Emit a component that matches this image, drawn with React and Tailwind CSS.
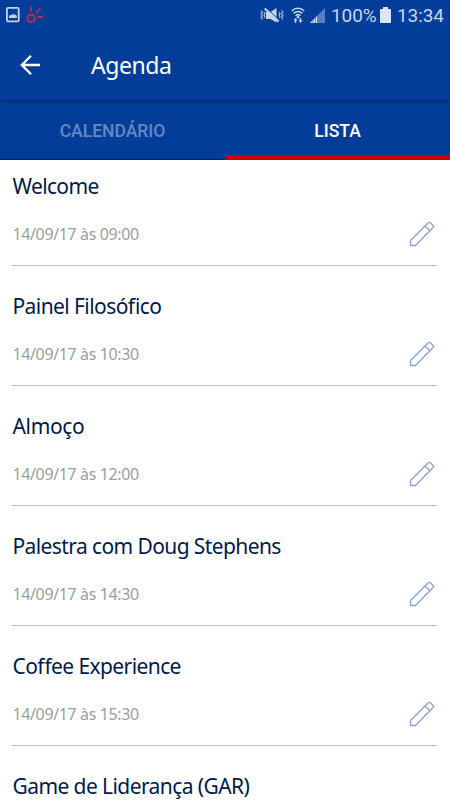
import React, { useState } from "react";

const EVENTS = [
  { title: "Welcome", date: "14/09/17 às 09:00", tracking: "tracking-[-0.65px]" },
  { title: "Painel Filosófico", date: "14/09/17 às 10:30", tracking: "tracking-[-0.58px]" },
  { title: "Almoço", date: "14/09/17 às 12:00", tracking: "tracking-[-0.35px]" },
  { title: "Palestra com Doug Stephens", date: "14/09/17 às 14:30", tracking: "tracking-[-0.6px]" },
  { title: "Coffee Experience", date: "14/09/17 às 15:30", tracking: "tracking-[-0.6px]" },
  { title: "Game de Liderança (GAR)", date: "14/09/17 às 17:00", tracking: "tracking-[-0.58px]" },
];

// ======================
// ICONS
// ======================
function PictureIcon() {
  return (
    <svg width="14" height="16" viewBox="0 0 14 16" fill="none">
      <rect x=".9" y=".9" width="11.8" height="13.4" rx="1" stroke="#c3d1ea" strokeWidth="1.8" />
      <path d="M3 11V9l1.5-1.2 1 .8L7 6.5 8.3 8l1.300-.5L10.800 9v2z" fill="#c3d1ea" />
    </svg>
  );
}

function SparkIcon() {
  return (
    <svg width="18" height="19" viewBox="0 0 18 19" fill="none" stroke="#ba2b4a">
      <circle cx="5.1" cy="12.4" r="3.7" strokeWidth="2.2" />
      <path d="M5 .7V6M9.600 7.200l5-4.800M11.600 11H17" strokeWidth="1.9" />
    </svg>
  );
}

function MuteIcon() {
  return (
    <svg width="24" height="17" viewBox="0 0 24 17" fill="none">
      <path d="M6 5h4.500L16.500 1v14.500L10.500 12H6z" fill="#c6d4ec" />
      <path d="M6.500 1l12.500 12" stroke="#023e99" strokeWidth="1" />
      <path d="M4.800 1.500l13.700 13" stroke="#c6d4ec" strokeWidth="2.1" />
      <path
        d="M1 3.500l1.500 1.700L1 7l1.500 1.800L1 10.600l1.500 1.900M4 5l1 1.500L4 8l1 1.500L4 11M19 5l1 1.500L19 8l1 1.500-1 1.500M21.500 3.500L23 5.200 21.500 7 23 8.800l-1.500 1.800 1.500 1.900"
        stroke="#a9bfe1"
        strokeWidth="1.1"
      />
    </svg>
  );
}

function WifiIcon() {
  return (
    <svg width="14" height="17" viewBox="0 0 14 17" fill="none">
      <path
        d="M.8 4C4.300.4 9.700.4 13.200 4M2.700 6.400c2.400-2.400 6.200-2.400 8.600 0M4.600 8.700c1.400-1.400 3.400-1.400 4.800 0"
        stroke="#c6d4ec"
        strokeWidth="1.5"
      />
      <circle cx="7" cy="10.3" r="1.3" fill="#c6d4ec" />
      <path d="M2.500 13.500l2-2.500 2 2.500H5.200V16H3.800v-2.500zM7.500 13.300h1.300V11h1.400v2.300h1.300l-2 2.700z" fill="#c6d4ec" />
    </svg>
  );
}

function SignalIcon() {
  return (
    <svg width="15" height="15" viewBox="0 0 15 15">
      <path d="M15 0v15H0z" fill="#5480bd" />
      <path d="M7 8v7H0z" fill="#d5dff1" />
      <path d="M3 11v4M5.500 9v6" stroke="#3567ae" strokeWidth=".7" />
    </svg>
  );
}

function BatteryIcon() {
  return (
    <svg width="11" height="16" viewBox="0 0 11 16" fill="#dce5f4">
      <path d="M3 0h5v2h2.200q.8 0 .8.800v12.400q0 .8-.8.800H.8q-.8 0-.8-.8V2.800Q0 2 .8 2H3z" />
    </svg>
  );
}

function BackIcon() {
  return (
    <svg width="20" height="20" viewBox="0 0 20 20" fill="none" stroke="#fff" strokeWidth="2.3">
      <path d="M20 10H2M11 .8L1.800 10l9.200 9.200" />
    </svg>
  );
}

function PencilIcon() {
  return (
    <svg width="26" height="26" viewBox="0 0 26 26" fill="none" stroke="#85a5d6" strokeWidth="1.3">
      <path
        d="M1.500 24.500v-5L19.500 1.500q.8-.7 1.600 0l3.200 3.200q.7.800 0 1.600L6.500 24.500zM16 5l5 5"
        strokeLinejoin="round"
      />
    </svg>
  );
}

// ======================
// SECTIONS
// ======================
function StatusBar() {
  return (
    <div className="h-[30px] flex items-center justify-between pl-[6px] pr-[6px] text-[#c6d4ec]">
      <div className="flex items-center gap-[6px]">
        <PictureIcon />
        <SparkIcon />
      </div>
      <div className="flex items-center">
        <MuteIcon />
        <span className="ml-[7px]"><WifiIcon /></span>
        <span className="ml-[5px]"><SignalIcon /></span>
        <span className="ml-[6px] w-[46px] font-['Roboto',sans-serif] text-[19px] leading-none whitespace-nowrap tracking-[-0.1px]">
          100%
        </span>
        <span className="ml-[3px]"><BatteryIcon /></span>
        <span className="ml-[6px] w-[47px] font-['Roboto',sans-serif] text-[19px] leading-none whitespace-nowrap tracking-[-0.1px]">
          13:34
        </span>
      </div>
    </div>
  );
}

function EventRow({ event }) {
  return (
    <li className="h-[106px] shrink-0 border-b border-[#bcbcbc] pt-[11px]">
      <h2
        className={`h-[30px] pl-[0.5px] text-[21px] leading-[30px] whitespace-nowrap text-[#001a4d] [font-feature-settings:'liga'_1] ${event.tracking}`}
      >
        {event.title}
      </h2>
      <div className="mt-[18px] h-[30px] flex items-center justify-between pl-[0.5px] pr-[2px]">
        <span className="text-[16px] tracking-[-0.38px] text-[#9d9d9d]">{event.date}</span>
        <button aria-label="Editar">
          <PencilIcon />
        </button>
      </div>
    </li>
  );
}

export default function App() {
  const [tab, setTab] = useState("lista");

  const tabClass = (name) =>
    tab === name
      ? "border-b-[5px] border-[#cc0000] pt-[7px] text-white"
      : "border-b border-[#00207c] pt-[3px] text-[#6688c0]";

  // the sixth event runs past the fold, so only its title is visible
  return (
    <div className="w-full h-[800px] overflow-hidden bg-white font-['Noto_Sans',sans-serif]">
      <header className="relative bg-[#023e99] h-[100px] shadow-[0_1px_4px_rgba(0,0,0,0.45)]">
        <StatusBar />
        <div className="h-[70px] flex items-center pl-5">
          <button aria-label="Voltar">
            <BackIcon />
          </button>
          <h1 className="ml-[51px] text-[23px] leading-[30px] tracking-[-0.45px] text-white">Agenda</h1>
        </div>
      </header>

      <nav className="h-[60px] grid grid-cols-2 bg-[#023e99] font-['Roboto',sans-serif] text-[17.5px] font-medium">
        <button className={tabClass("calendario")} onClick={() => setTab("calendario")}>
          CALENDÁRIO
        </button>
        <button className={tabClass("lista")} onClick={() => setTab("lista")}>
          LISTA
        </button>
      </nav>

      <ul className="flex flex-col gap-[14px] px-3 pr-[13px]">
        {EVENTS.map((event) => (
          <EventRow key={event.title} event={event} />
        ))}
      </ul>
    </div>
  );
}
